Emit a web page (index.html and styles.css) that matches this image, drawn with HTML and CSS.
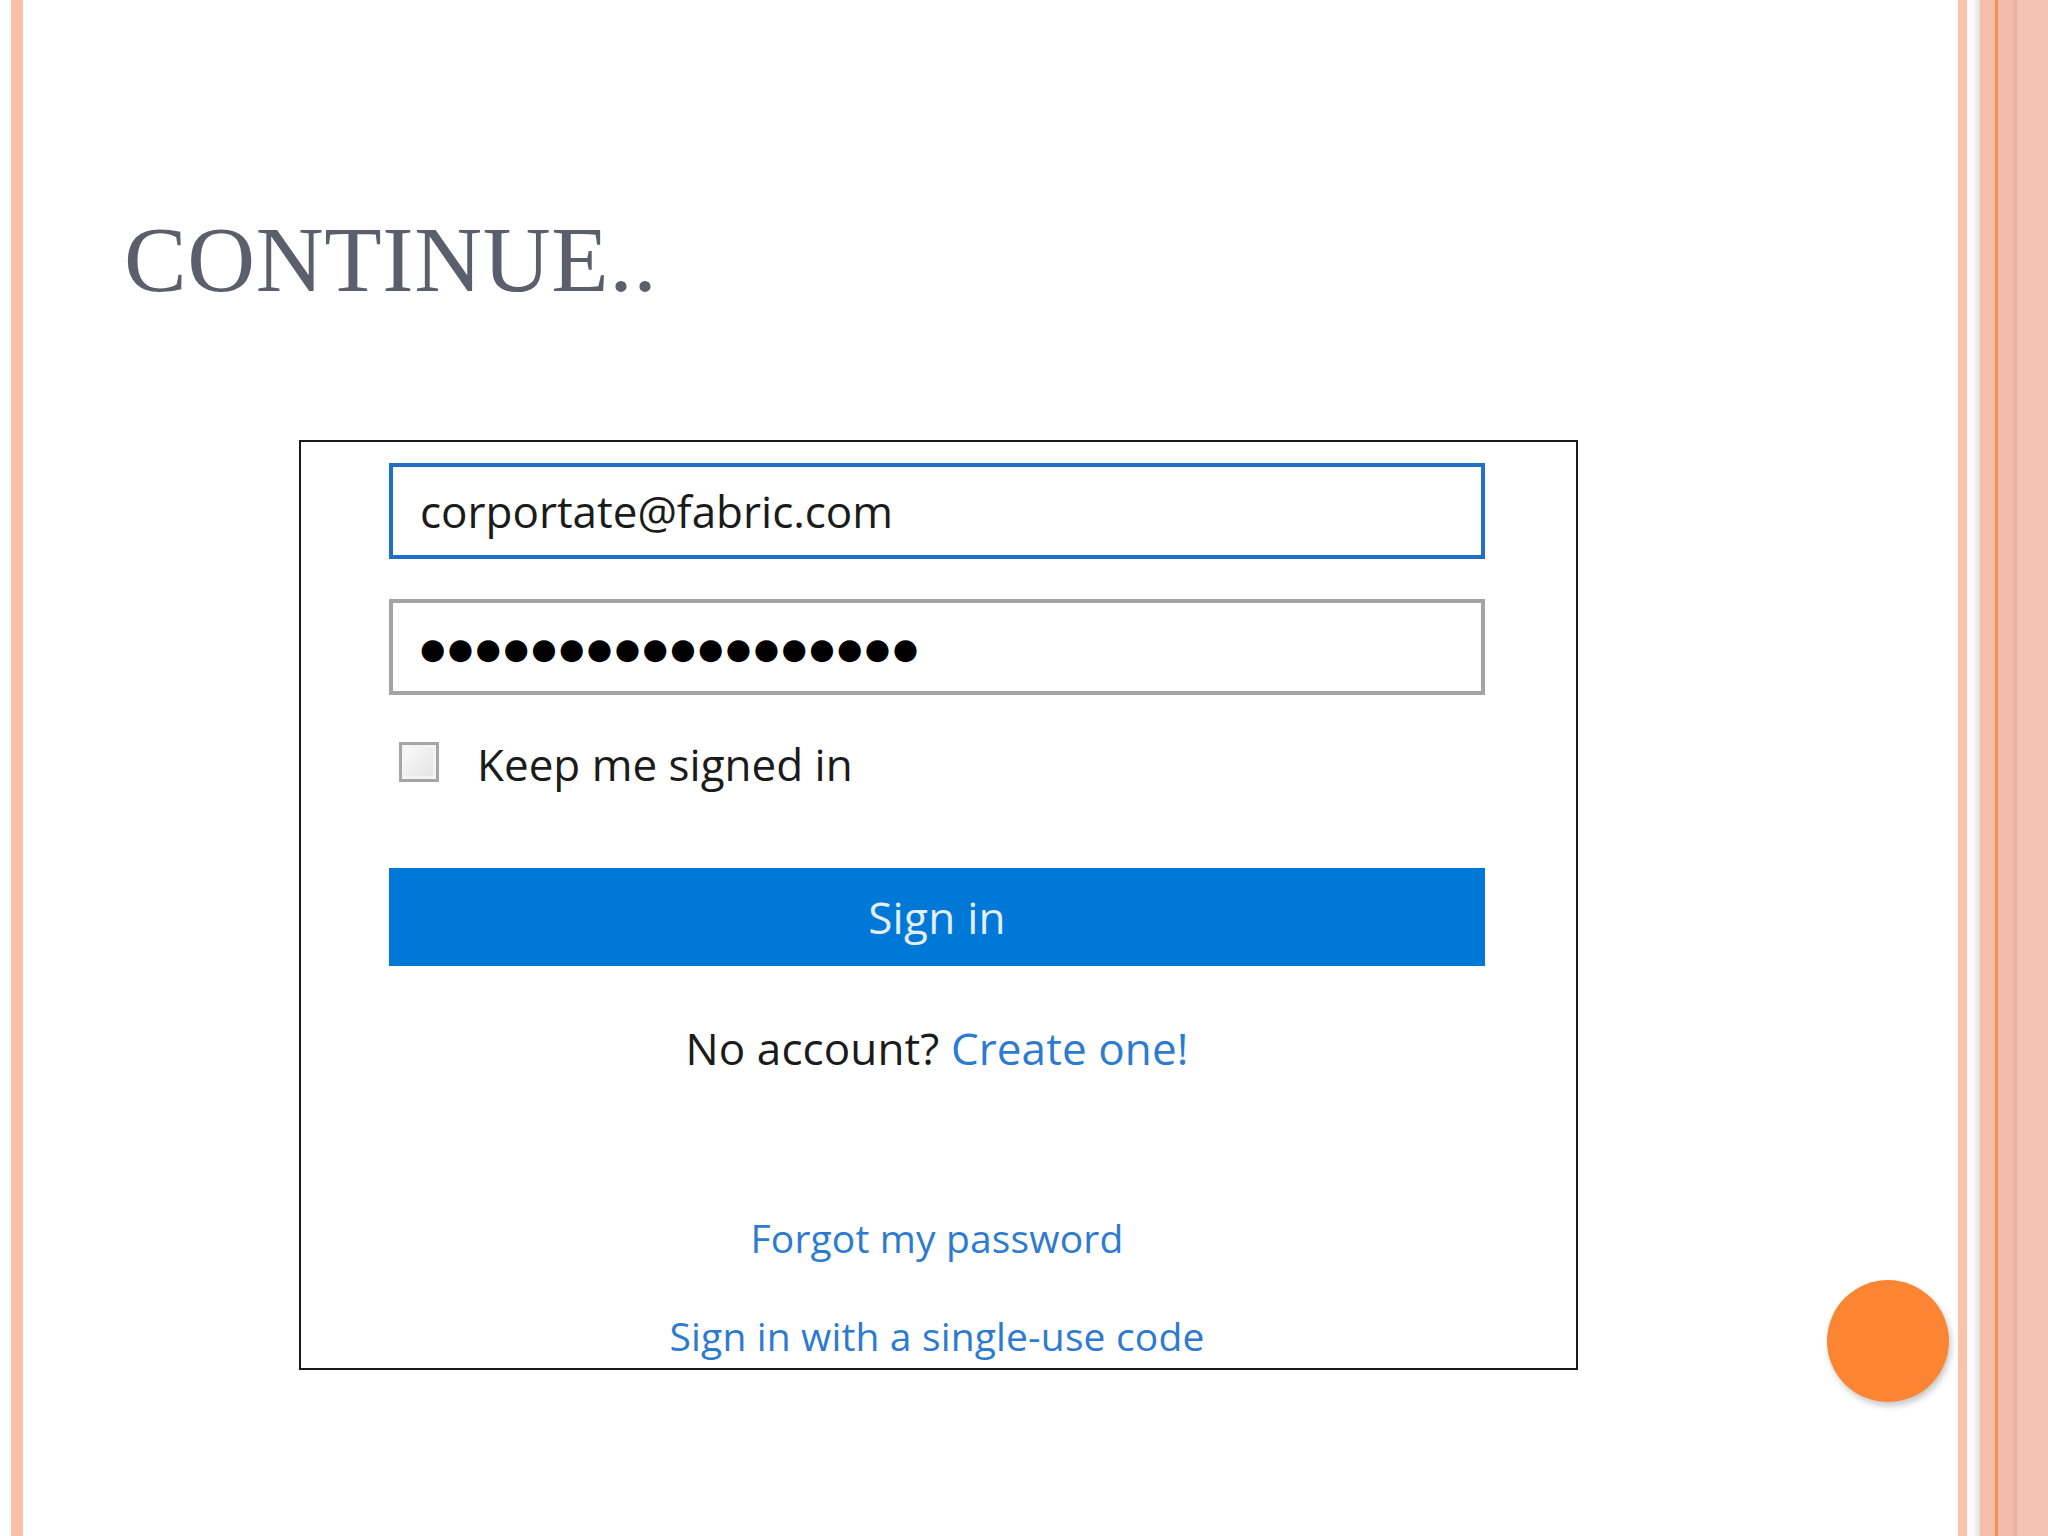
FILE: index.html
```html
<!DOCTYPE html>
<html lang="en">
<head>
<meta charset="utf-8">
<title>Continue..</title>
<link rel="stylesheet" href="styles.css">
</head>
<body>
<div class="slide">
  <div class="edge-left"></div>
  <main class="content">
    <h1 class="title">CONTINUE..</h1>
    <div class="shot">
      <div class="field field-email">corportate@fabric.com</div>
      <div class="field field-pass"><span class="dots">●●●●●●●●●●●●●●●●●●</span></div>
      <div class="keep"><span class="check"></span><span class="keep-text">Keep me signed in</span></div>
      <div class="btn">Sign in</div>
      <p class="noacc">No account? <span class="link-inline">Create one!</span></p>
      <p class="link link-forgot">Forgot my password</p>
      <p class="link link-code">Sign in with a single-use code</p>
    </div>
  </main>
  <div class="edge-right">
    <div class="s s1"></div>
    <div class="s s2"></div>
    <div class="s s3"></div>
    <div class="s s4"></div>
    <div class="s s5"></div>
    <div class="s s6"></div>
    <div class="s s7"></div>
  </div>
  <div class="fab"></div>
</div>
</body>
</html>
```
FILE: styles.css
```css
html, body {
  margin: 0;
  padding: 0;
  background: #ffffff;
}

.slide {
  position: relative;
  display: flex;
  width: 2048px;
  height: 1536px;
  overflow: hidden;
  background: #ffffff;
}

.edge-left {
  flex: 0 0 12px;
  margin-left: 11px;
  background: #fcc0a9;
}

.content {
  flex: 1 1 auto;
  padding-left: 101px;
  padding-top: 212px;
}

.title {
  margin: 0;
  font-family: "Liberation Serif", "Times New Roman", serif;
  font-weight: normal;
  font-size: 94px;
  line-height: 1;
  color: #5b5f6b;
  letter-spacing: 0.6px;
}

.shot {
  box-sizing: border-box;
  width: 1279px;
  height: 930px;
  margin-top: 134px;
  margin-left: 175px;
  border: 2px solid #1a1a1a;
  padding: 21px 91px 0 88px;
  font-family: "Open Sans", "Noto Sans", sans-serif;
  color: #1b1b1b;
}

.field {
  box-sizing: border-box;
  height: 96px;
  display: flex;
  align-items: center;
  padding-left: 27px;
  font-size: 44px;
}

.field-email {
  border: 4px solid #1f70c6;
}

.field-pass {
  margin-top: 40px;
  border: 4px solid #a4a4a4;
}

.dots {
  font-family: "DejaVu Sans", sans-serif;
  font-size: 29px;
  letter-spacing: 2.5px;
  color: #000;
  padding-top: 4px;
}

.keep {
  display: flex;
  align-items: center;
  margin-top: 47px;
  height: 40px;
}

.check {
  box-sizing: border-box;
  width: 40px;
  height: 40px;
  margin-left: 10px;
  border: 3px solid #a6a6a6;
  background: linear-gradient(135deg, #fbfbfb 0%, #e2e2e2 100%);
  box-shadow: inset 0 0 0 3px #f4f4f4;
}

.keep-text {
  margin-left: 38px;
  font-size: 44px;
  line-height: 1;
  padding-top: 4px;
}

.btn {
  margin-top: 86px;
  height: 98px;
  background: #0078d7;
  color: #e4eefa;
  font-size: 44px;
  letter-spacing: 0.3px;
  display: flex;
  align-items: center;
  justify-content: center;
}

.noacc {
  margin: 52px 0 0 0;
  height: 60px;
  line-height: 60px;
  text-align: center;
  font-size: 44px;
  letter-spacing: 0.1px;
}

.link-inline {
  color: #2d7bd0;
}

.link {
  margin: 0;
  height: 56px;
  line-height: 56px;
  text-align: center;
  font-size: 39px;
  letter-spacing: 0.15px;
  color: #2d7bd0;
}

.link-forgot {
  margin-top: 132px;
}

.link-code {
  margin-top: 42px;
}

.edge-right {
  flex: 0 0 90px;
  display: flex;
}

.s { height: 100%; }
.s1 { flex: 0 0 9px; background: #fbc3ad; }
.s2 { flex: 0 0 13px; background: linear-gradient(to right, #ffffff 0%, #fafafa 50%, #dedede 100%); }
.s3 { flex: 0 0 15px; background: #f6bfaa; }
.s4 { flex: 0 0 3px; background: #f68f58; }
.s5 { flex: 0 0 15px; background: #f1bdaa; }
.s6 { flex: 0 0 4px; background: #ecb29e; }
.s7 { flex: 1 1 auto; background: #f3c2b0; }

.fab {
  position: absolute;
  left: 1827px;
  top: 1280px;
  width: 122px;
  height: 122px;
  border-radius: 50%;
  background: #fb8533;
  box-shadow: 2px 4px 6px rgba(0, 0, 0, 0.22);
}
```
